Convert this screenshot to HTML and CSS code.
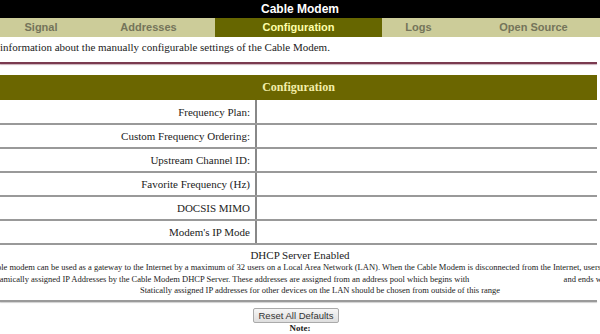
FILE: index.html
```html
<!DOCTYPE html>
<html lang="en">
<head>
    <meta charset="UTF-8">
    <title>Cable Modem - Configuration</title>
    <link rel="stylesheet" href="styles.css">
</head>
<body>
    <div class="page">
        <div class="title-bar">Cable Modem</div>

        <nav class="tabs">
            <a href="#signal">Signal</a>
            <a href="#addresses">Addresses</a>
            <a href="#configuration" class="active">Configuration</a>
            <a href="#logs">Logs</a>
            <a href="#opensource">Open Source</a>
        </nav>

        <p class="intro">information about the manually configurable settings of the Cable Modem.</p>
        <hr class="rule">

        <table class="config">
            <tr><th colspan="2">Configuration</th></tr>
            <tr><td class="label">Frequency Plan:</td><td></td></tr>
            <tr><td class="label">Custom Frequency Ordering:</td><td></td></tr>
            <tr><td class="label">Upstream Channel ID:</td><td></td></tr>
            <tr><td class="label">Favorite Frequency (Hz)</td><td></td></tr>
            <tr><td class="label">DOCSIS MIMO</td><td></td></tr>
            <tr><td class="label">Modem's IP Mode</td><td></td></tr>
        </table>

        <div class="dhcp">
            <h3>DHCP Server Enabled</h3>
            <div class="wide">
                <div class="line">The Cable modem can be used as a gateway to the Internet by a maximum of 32 users on a Local Area Network (LAN). When the Cable Modem is disconnected from the Internet, users on the LAN can be</div>
                <div class="line">dynamically assigned IP Addresses by the Cable Modem DHCP Server. These addresses are assigned from an address pool which begins with <span class="gap"></span> and ends with <span class="gap short"></span>.</div>
                <div class="line">Statically assigned IP addresses for other devices on the LAN should be chosen from outside of this range</div>
            </div>
        </div>
        <hr class="rule gray">

        <div class="actions">
            <button type="button">Reset All Defaults</button>
            <strong>Note:</strong>
            <div class="wide">
                <div class="line">Resetting the cable modem to its factory default configuration will remove all stored parameters learned by the Cable Modem during prior initializations.</div>
            </div>
        </div>
    </div>
</body>
</html>
```

FILE: styles.css
```css
* {
    box-sizing: border-box;
}

body {
    margin: 0;
    background: #fff;
    overflow: hidden;
    font-family: "Liberation Serif", "Times New Roman", Times, serif;
    color: #222;
}

.page {
    width: 600px;
}

.title-bar {
    background: #000;
    color: #fff;
    font-family: "Liberation Sans", Arial, sans-serif;
    font-weight: bold;
    font-size: 12px;
    text-align: center;
    height: 18px;
    line-height: 18px;
}

.tabs {
    display: grid;
    grid-template-columns: 82px 133px 167px 73px 157px;
    width: 612px;
    background: #cccc99;
    height: 19px;
}

.tabs a {
    font-family: "Liberation Sans", Arial, sans-serif;
    font-weight: bold;
    font-size: 11px;
    line-height: 19px;
    text-align: center;
    color: #74745a;
    text-decoration: none;
}

.tabs a.active {
    background: #666600;
    color: #ffffaa;
}

.intro {
    margin: 0;
    padding-top: 3px;
    font-size: 11px;
    line-height: 14px;
    white-space: nowrap;
}

.rule {
    margin: 8px 0 0;
    width: 597px;
    border: 0;
    border-top: 2px solid #7a3a50;
    box-shadow: 0 1px 1px #c9b0b8;
}

.rule.gray {
    margin-top: 3px;
    border-top-color: #9a9a9a;
    box-shadow: 0 1px 1px #d0d0d0;
}

.config {
    margin-top: 11px;
    width: 597px;
    border-collapse: collapse;
}

.config th {
    background: #6b6600;
    color: #f3eeaa;
    font-size: 12px;
    font-weight: bold;
    height: 25px;
    text-align: center;
}

.config td {
    height: 24px;
    border-bottom: 2px solid #999;
    font-size: 11px;
}

.config td.label {
    width: 256px;
    text-align: right;
    padding-right: 5px;
    border-right: 2px solid #888;
}

.dhcp {
    text-align: center;
}

.dhcp h3 {
    margin: 4px 0 0;
    font-size: 11px;
    font-weight: normal;
    line-height: 13px;
}

.wide {
    width: 760px;
    margin-left: -60px;
    text-align: center;
}

.line {
    white-space: nowrap;
    font-size: 8.5px;
    line-height: 11.5px;
}

.line .gap {
    display: inline-block;
    width: 90px;
}

.line .gap.short {
    width: 38px;
}

.actions {
    display: flex;
    flex-direction: column;
    align-items: center;
    padding-top: 6px;
}

.actions button {
    font-family: "Liberation Sans", Arial, sans-serif;
    font-size: 9.5px;
    color: #333;
    background: linear-gradient(#f6f6f6, #dedede);
    border: 1px solid #aaa;
    border-radius: 2px;
    padding: 1px 5px;
    height: 15px;
    margin-right: 8px;
}

.actions strong {
    font-size: 9px;
    line-height: 11px;
}

.actions .wide {
    margin-left: 0;
}
```
